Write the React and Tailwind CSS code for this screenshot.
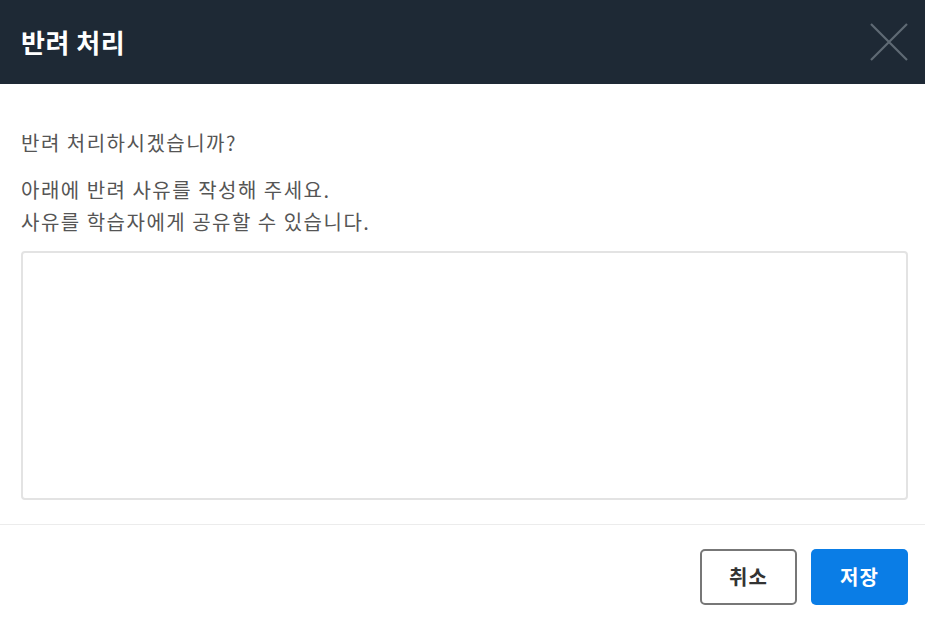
import React from "react";

const App = () => {
  return (
    <div
      className="w-[925px] h-[623px] bg-white flex flex-col"
      style={{ fontFamily: '"Noto Sans CJK KR", "Noto Sans", sans-serif' }}
    >
      {/* Header */}
      <div className="h-[84px] bg-[#1e2935] flex items-center justify-between pl-[21px] pr-[16px] shrink-0">
        <h1 className="text-[26px] font-bold text-white leading-none tracking-[0.5px]">반려 처리</h1>
        <button className="w-[40px] h-[40px] flex items-center justify-center">
          <svg width="40" height="40" viewBox="0 0 40 40" fill="none">
            <path d="M2 2L38 38M38 2L2 38" stroke="#5f6a74" strokeWidth="2.2" />
          </svg>
        </button>
      </div>

      {/* Body */}
      <div className="px-[21px] pt-[43px] pb-[24px] border-b border-[#ececec]">
        <p className="text-[20px] text-[#555] leading-[32px] tracking-[1.5px]">반려 처리하시겠습니까?</p>
        <p className="text-[20px] text-[#555] leading-[32px] tracking-[1.5px] mt-[15px]">
          아래에 반려 사유를 작성해 주세요.
          <br />
          사유를 학습자에게 공유할 수 있습니다.
        </p>
        <textarea className="mt-[13px] w-[887px] h-[249px] border-2 border-[#e3e3e3] rounded-[4px] resize-none outline-none block p-3 text-[18px]" />
      </div>

      {/* Footer */}
      <div className="flex justify-end gap-[14px] px-[17px] pt-[24px]">
        <button className="w-[97px] h-[56px] border-2 border-[#777] rounded-[5px] bg-white text-[20px] font-bold text-[#333] tracking-[1px]">
          취소
        </button>
        <button className="w-[97px] h-[56px] rounded-[5px] bg-[#0a7de6] text-[20px] font-bold text-white tracking-[1px]">
          저장
        </button>
      </div>
    </div>
  );
};

export default App;
